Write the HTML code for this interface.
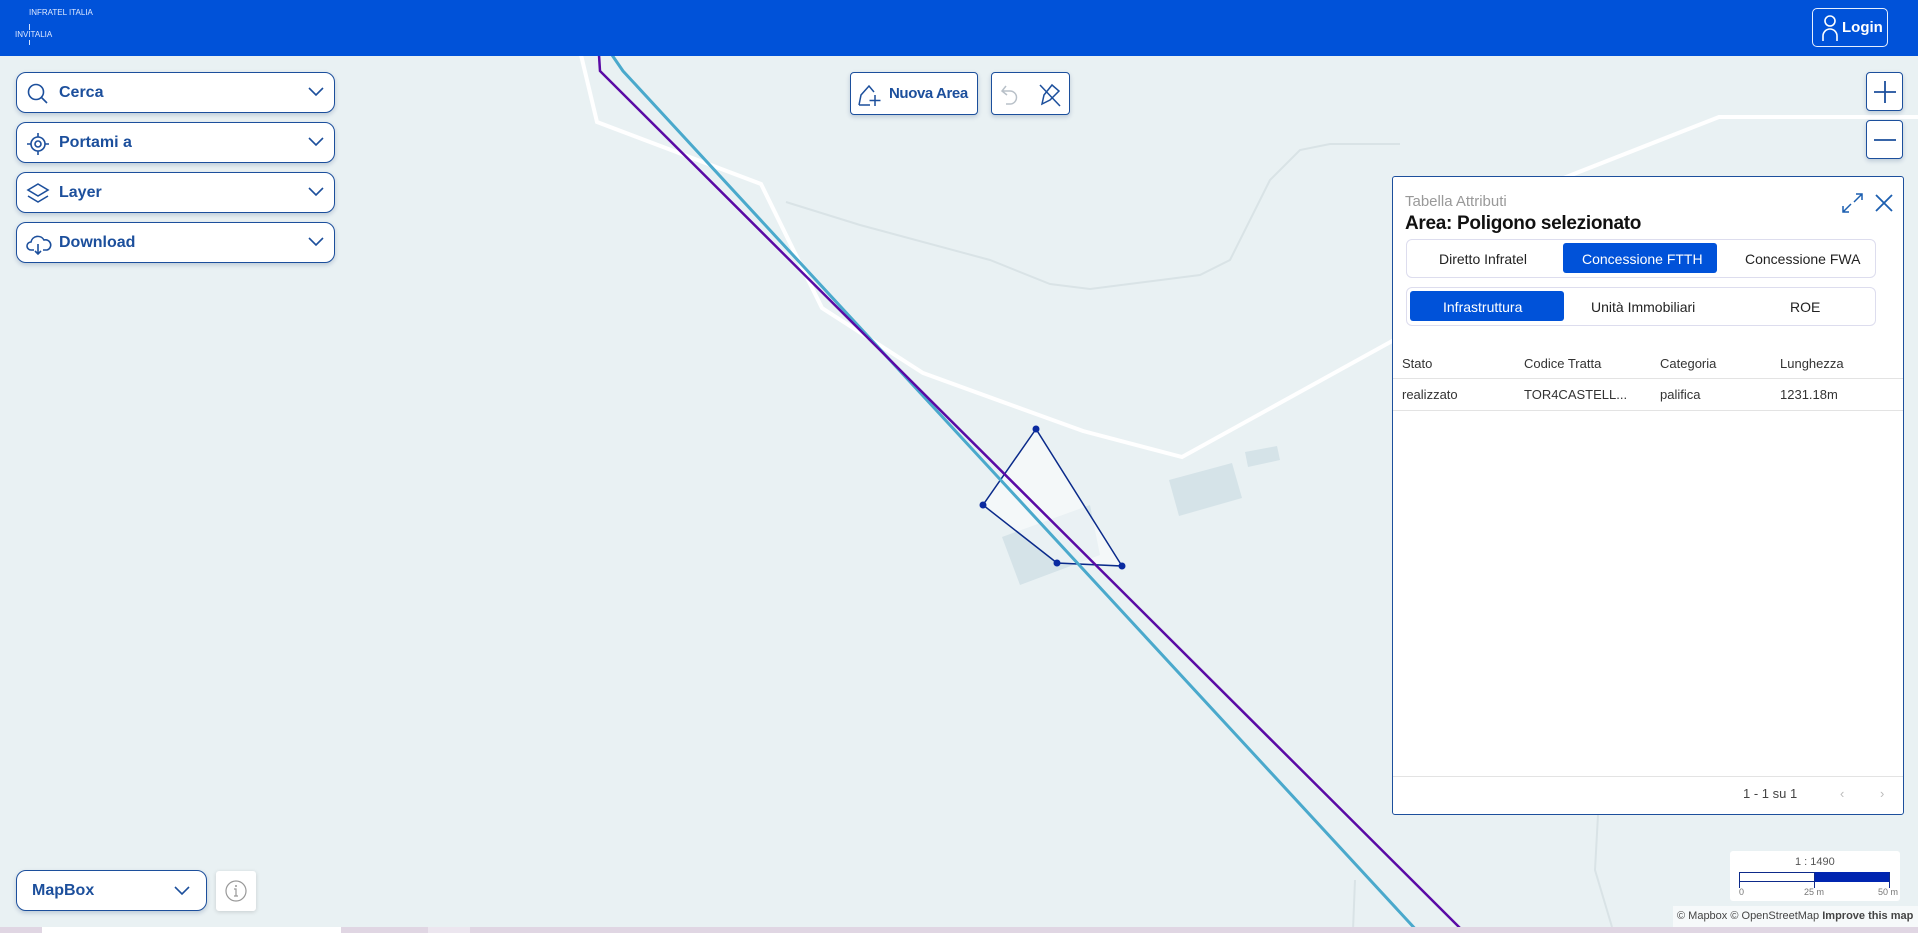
<!DOCTYPE html>
<html><head><meta charset="utf-8"><style>
*{box-sizing:border-box;margin:0;padding:0}
html{overflow:hidden;width:1918px;height:933px}
body{width:1918px;height:933px;overflow:hidden;background:#e9f1f3;font-family:"Liberation Sans",sans-serif;position:relative}
.hdr{position:absolute;left:0;top:0;width:1918px;height:56px;background:#0052d9}
.ab{position:absolute;background:#fff;border:1.5px solid #1c4f9c;border-radius:10px;box-shadow:0 2px 5px rgba(0,40,100,.2);color:#1c4f9c;font-weight:bold}
.lb{left:16px;width:319px;height:41px;font-size:16px}
.lb span{position:absolute;left:42px;top:11px}
.lb svg.ic{position:absolute;left:9px;top:9px}
.lb svg.ch{position:absolute;right:10px;top:14px}
.t{position:absolute;white-space:nowrap}
</style></head><body>
<svg width="1918" height="933" style="position:absolute;left:0;top:0">
<polyline points="581,55 597,122 761,184 822,308 923,373 1083,431 1182,457 1394,340 1556,181 1719,117 1918,117" fill="none" stroke="#fff" stroke-width="4"/>
<polyline points="786,202 860,225 990,260 1050,284 1090,289 1200,275 1230,260 1270,180 1300,150 1330,144 1400,144" fill="none" stroke="#d9e3e6" stroke-width="2"/>
<polyline points="1310,1000 1345,935 1355,928" fill="none" stroke="#d9e3e6" stroke-width="2"/>
<polyline points="1598,815 1595,870 1612,927" fill="none" stroke="#d9e3e6" stroke-width="2"/>
<line x1="1353" y1="930" x2="1355" y2="880" stroke="#d9e3e6" stroke-width="2"/>
<polygon points="1169,480 1232,463 1242,498 1179,516" fill="#d5e3e8"/>
<polygon points="1245,452 1277,446 1280,460 1248,467" fill="#d5e3e8"/>
<polygon points="1002,537 1090,505 1100,555 1020,585" fill="#d5e3e8"/>
<polygon points="1036,429 983,505 1057,563 1122,566" fill="rgba(255,255,255,.5)" stroke="#0a2a8a" stroke-width="1.5"/>
<polyline points="612,55 623,71 1419,933" fill="none" stroke="#4aa9cc" stroke-width="3"/>
<polyline points="599,55 600,71 1465,933" fill="none" stroke="#5a0aa5" stroke-width="2.5"/>
<g fill="#0a2aa0"><circle cx="1036" cy="429" r="3.5"/><circle cx="983" cy="505" r="3.5"/><circle cx="1057" cy="563" r="3.5"/><circle cx="1122" cy="566" r="3.5"/></g>
<rect x="0" y="927" width="1918" height="6" fill="#e0d6e3"/>
<rect x="42" y="927" width="299" height="6" fill="#fff"/>
<rect x="428" y="927" width="42" height="6" fill="#ece6ef"/>
</svg>
<div class="hdr">
<div class="t" style="left:29px;top:8px;font-size:8px;color:#dfe9ff">INFRATEL ITALIA</div>
<div class="t" style="left:15px;top:30px;font-size:8px;color:#dfe9ff">INVITALIA</div>
<div style="position:absolute;left:29px;top:24px;width:1px;height:6px;background:#cfe0ff"></div>
<div style="position:absolute;left:29px;top:40px;width:1px;height:5px;background:#cfe0ff"></div>
<div style="position:absolute;left:1812px;top:8px;width:76px;height:39px;border:1.5px solid #e6efff;border-radius:5px"></div>
<svg style="position:absolute;left:1821px;top:14px" width="18" height="28"><circle cx="9" cy="7" r="5" fill="none" stroke="#fff" stroke-width="1.6"/><path d="M2 27 V22 a7 7 0 0 1 14 0 V27" fill="none" stroke="#fff" stroke-width="1.6"/></svg>
<div class="t" style="left:1842px;top:19px;color:#fff;font-weight:bold;font-size:15px">Login</div>
</div>
<div class="ab lb" style="top:72px"><svg class="ic" width="24" height="24"><circle cx="10" cy="10" r="7.5" fill="none" stroke="#1c4f9c" stroke-width="1.6"/><line x1="15.5" y1="15.5" x2="21" y2="21" stroke="#1c4f9c" stroke-width="1.6"/></svg><span>Cerca</span><svg class="ch" width="16" height="10"><path d="M1 1 L8 8 L15 1" fill="none" stroke="#1c4f9c" stroke-width="1.6"/></svg></div>
<div class="ab lb" style="top:122px"><svg class="ic" width="24" height="24"><circle cx="12" cy="12" r="7" fill="none" stroke="#1c4f9c" stroke-width="1.6"/><circle cx="12" cy="12" r="3" fill="none" stroke="#1c4f9c" stroke-width="1.6"/><path d="M12 1v4M12 19v4M1 12h4M19 12h4" stroke="#1c4f9c" stroke-width="1.6"/></svg><span>Portami a</span><svg class="ch" width="16" height="10"><path d="M1 1 L8 8 L15 1" fill="none" stroke="#1c4f9c" stroke-width="1.6"/></svg></div>
<div class="ab lb" style="top:172px"><svg class="ic" width="24" height="24"><path d="M12 2 L22 8 L12 14 L2 8 Z" fill="none" stroke="#1c4f9c" stroke-width="1.6"/><path d="M2 14 L12 20 L22 14" fill="none" stroke="#1c4f9c" stroke-width="1.6"/></svg><span>Layer</span><svg class="ch" width="16" height="10"><path d="M1 1 L8 8 L15 1" fill="none" stroke="#1c4f9c" stroke-width="1.6"/></svg></div>
<div class="ab lb" style="top:222px"><svg class="ic" width="26" height="24"><path d="M8 18 H5 a4 4 0 0 1 0-8 a7 7 0 0 1 13-2 a5 5 0 0 1 3 10 H17" fill="none" stroke="#1c4f9c" stroke-width="1.6"/><path d="M12 12 V22 M9 19 L12 22 L15 19" fill="none" stroke="#1c4f9c" stroke-width="1.6"/></svg><span>Download</span><svg class="ch" width="16" height="10"><path d="M1 1 L8 8 L15 1" fill="none" stroke="#1c4f9c" stroke-width="1.6"/></svg></div>
<div class="ab" style="left:850px;top:72px;width:128px;height:43px;border-radius:4px;font-size:15px;letter-spacing:-0.4px"><svg style="position:absolute;left:6px;top:10px" width="26" height="24"><path d="M2 22 L4 12 L12 3 L17 9 M2 22 H13" fill="none" stroke="#1c4f9c" stroke-width="1.5"/><path d="M18 12 V23 M12.5 17.5 H23.5" stroke="#1c4f9c" stroke-width="1.5"/></svg><span class="t" style="left:38px;top:12px">Nuova Area</span></div>
<div class="ab" style="left:991px;top:72px;width:79px;height:43px;border-radius:4px"><svg style="position:absolute;left:8px;top:9px" width="64" height="26"><path d="M6 4 L2 9 L7 13 M2 9 H10 a6 6 0 0 1 0 13 H6" fill="none" stroke="#b8c0c8" stroke-width="1.5"/><path d="M42 22 L44 13 L52 3 L59 9 L50 18 Z M40 3 L60 24" fill="none" stroke="#1c4f9c" stroke-width="1.5"/></svg></div>
<div class="ab" style="left:1866px;top:72px;width:37px;height:39px;border-radius:4px"><svg style="position:absolute;left:6px;top:7px" width="24" height="24"><path d="M12 1V23M1 12H23" stroke="#1c4f9c" stroke-width="1.8"/></svg></div>
<div class="ab" style="left:1866px;top:120px;width:37px;height:39px;border-radius:4px"><svg style="position:absolute;left:6px;top:7px" width="24" height="24"><path d="M1 12H23" stroke="#1c4f9c" stroke-width="1.8"/></svg></div>
<div style="position:absolute;left:1392px;top:176px;width:512px;height:639px;background:#fff;border:1.5px solid #1c4f9c;border-radius:3px">
<div class="t" style="left:12px;top:16px;font-size:15px;color:#999">Tabella Attributi</div>
<div class="t" style="left:12px;top:36px;font-size:19px;font-weight:bold;color:#111;letter-spacing:-0.3px">Area: Poligono selezionato</div>
<svg style="position:absolute;left:447px;top:13px" width="60" height="26"><path d="M3 22 L11 14 M3 16 V22 H9 M22 4 L14 12 M16 4 H22 V10" fill="none" stroke="#1c5fb0" stroke-width="1.5"/><path d="M36 5 L52 21 M52 5 L36 21" stroke="#1c5fb0" stroke-width="1.8"/></svg>
<div style="position:absolute;left:13px;top:62px;width:470px;height:39px;border:1px solid #dde;border-radius:6px"></div>
<div style="position:absolute;left:170px;top:66px;width:154px;height:30px;background:#0052d9;border-radius:3px"></div>
<div class="t" style="left:46px;top:74px;font-size:14px;color:#222">Diretto Infratel</div>
<div class="t" style="left:189px;top:74px;font-size:14px;color:#fff">Concessione FTTH</div>
<div class="t" style="left:352px;top:74px;font-size:14px;color:#222">Concessione FWA</div>
<div style="position:absolute;left:13px;top:110px;width:470px;height:39px;border:1px solid #dde;border-radius:6px"></div>
<div style="position:absolute;left:17px;top:114px;width:154px;height:30px;background:#0052d9;border-radius:3px"></div>
<div class="t" style="left:50px;top:122px;font-size:14px;color:#fff">Infrastruttura</div>
<div class="t" style="left:198px;top:122px;font-size:14px;color:#222">Unità Immobiliari</div>
<div class="t" style="left:397px;top:122px;font-size:14px;color:#222">ROE</div>
<div class="t" style="left:9px;top:179px;font-size:13px;color:#333">Stato</div>
<div class="t" style="left:131px;top:179px;font-size:13px;color:#333">Codice Tratta</div>
<div class="t" style="left:267px;top:179px;font-size:13px;color:#333">Categoria</div>
<div class="t" style="left:387px;top:179px;font-size:13px;color:#333">Lunghezza</div>
<div style="position:absolute;left:0;top:201px;width:510px;height:1px;background:#e3e3e3"></div>
<div class="t" style="left:9px;top:210px;font-size:13px;color:#333">realizzato</div>
<div class="t" style="left:131px;top:210px;font-size:13px;color:#333">TOR4CASTELL...</div>
<div class="t" style="left:267px;top:210px;font-size:13px;color:#333">palifica</div>
<div class="t" style="left:387px;top:210px;font-size:13px;color:#333">1231.18m</div>
<div style="position:absolute;left:0;top:233px;width:510px;height:1px;background:#e3e3e3"></div>
<div style="position:absolute;left:0;top:599px;width:510px;height:1px;background:#e3e3e3"></div>
<div class="t" style="left:350px;top:609px;font-size:13px;color:#444">1 - 1 su 1</div>
<div class="t" style="left:447px;top:609px;font-size:13px;color:#bbb">‹</div>
<div class="t" style="left:487px;top:609px;font-size:13px;color:#bbb">›</div>
</div>
<div class="ab" style="left:16px;top:870px;width:191px;height:41px;font-size:16px"><span class="t" style="left:15px;top:11px">MapBox</span><svg style="position:absolute;right:16px;top:15px" width="16" height="10"><path d="M1 1 L8 8 L15 1" fill="none" stroke="#1c4f9c" stroke-width="1.6"/></svg></div>
<div style="position:absolute;left:216px;top:871px;width:40px;height:40px;background:#fff;border-radius:3px;box-shadow:0 1px 4px rgba(0,0,0,.15)"><svg style="position:absolute;left:9px;top:9px" width="22" height="22"><circle cx="11" cy="11" r="10" fill="none" stroke="#999" stroke-width="1.2"/><path d="M9 9H11V16M9 16H13" fill="none" stroke="#999" stroke-width="1.2"/><circle cx="11" cy="6" r="1" fill="#999"/></svg></div>
<div style="position:absolute;left:1730px;top:851px;width:170px;height:50px;background:#fff;border-radius:3px">
<div class="t" style="left:65px;top:5px;font-size:11px;color:#555">1 : 1490</div>
<div style="position:absolute;left:9px;top:21px;width:150px;height:10px;border:1.2px solid #0d2a8a"></div>
<div style="position:absolute;left:84px;top:21px;width:75px;height:10px;background:#0025b0"></div>
<div style="position:absolute;left:9px;top:21px;width:1px;height:16px;background:#0d2a8a"></div>
<div style="position:absolute;left:84px;top:21px;width:1px;height:16px;background:#0d2a8a"></div>
<div style="position:absolute;left:159px;top:21px;width:1px;height:16px;background:#0d2a8a"></div>
<div class="t" style="left:9px;top:36px;font-size:9px;color:#777">0</div>
<div class="t" style="left:74px;top:36px;font-size:9px;color:#777">25 m</div>
<div class="t" style="left:148px;top:36px;font-size:9px;color:#777">50 m</div>
</div>
<div class="t" style="left:1673px;top:906px;width:245px;height:21px;overflow:hidden;background:rgba(255,255,255,.6);font-size:11px;color:#444;padding:4px 0 0 4px">© Mapbox © OpenStreetMap <b>Improve this map</b></div>
</body></html>
